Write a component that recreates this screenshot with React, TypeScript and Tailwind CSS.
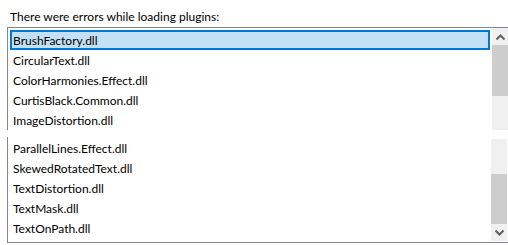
import React from "react";

const top = ["BrushFactory.dll", "CircularText.dll", "ColorHarmonies.Effect.dll", "CurtisBlack.Common.dll", "ImageDistortion.dll"];
const bottom = ["ParallelLines.Effect.dll", "SkewedRotatedText.dll", "TextDistortion.dll", "TextMask.dll", "TextOnPath.dll"];

function Up() {
  return (
    <svg width="9" height="6" viewBox="0 0 9 6" className="block">
      <path d="M0.5 5.5 L4.5 1.5 L8.5 5.5" stroke="#606060" strokeWidth="2" fill="none" />
    </svg>
  );
}
function Down() {
  return (
    <svg width="9" height="6" viewBox="0 0 9 6" className="block">
      <path d="M0.5 0.5 L4.5 4.5 L8.5 0.5" stroke="#606060" strokeWidth="2" fill="none" />
    </svg>
  );
}

export default function App() {
  return (
    <div
      className="w-[508px] h-[245px] bg-white overflow-hidden text-[12px] text-black"
      style={{ fontFamily: "Lato, 'Noto Sans', sans-serif" }}
    >
      <div className="h-[27px] pl-[10px] pt-[9px] leading-[16px]">There were errors while loading plugins:</div>
      {/* top panel */}
      <div className="ml-[7px] w-[510px] h-[103px] border-l border-t border-[#828790] flex">
        <div className="w-[484px] pl-[2px] pt-[2px] flex flex-col">
          {top.map((t, i) => (
            <div
              key={t}
              className={
                i === 0
                  ? "h-[20px] w-[480px] border-2 border-[#0078d7] bg-[#c4e0f6] pl-[1px] leading-[17px]"
                  : "h-[20px] w-[480px] pl-[3px] leading-[21px]"
              }
            >
              {t}
            </div>
          ))}
        </div>
        <div className="w-[17px] flex flex-col">
          <div className="h-[17px] bg-[#f0f0f0] flex items-center justify-center">
            <Up />
          </div>
          <div className="h-[51px] bg-[#cdcdcd]" />
          <div className="flex-1 bg-[#f0f0f0]" />
        </div>
      </div>
      <div className="h-[7px]" />
      {/* bottom panel */}
      <div className="ml-[7px] w-[510px] h-[106px] border-l border-b border-[#828790] flex">
        <div className="w-[483px] pl-[2px] pt-[1px] flex flex-col">
          {bottom.map((t) => (
            <div key={t} className="h-[20px] w-[480px] pl-[3px] leading-[21px]">
              {t}
            </div>
          ))}
        </div>
        <div className="w-[16px] pt-[2px] pb-[1px] flex flex-col">
          <div className="h-[35px] bg-[#f0f0f0]" />
          <div className="h-[50px] bg-[#cdcdcd]" />
          <div className="flex-1 bg-[#f0f0f0] flex items-center justify-center">
            <Down />
          </div>
        </div>
      </div>
    </div>
  );
}
